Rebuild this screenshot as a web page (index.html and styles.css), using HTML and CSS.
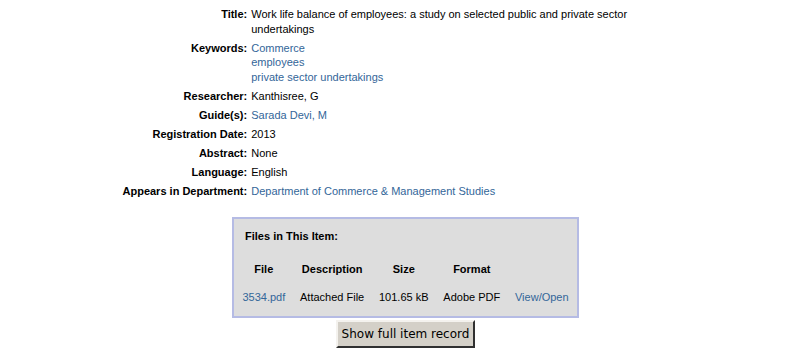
FILE: index.html
```html
<!doctype html>
<html lang="en">

<head>
    <meta charset="utf-8" />
    <meta name="viewport" content="width=device-width, initial-scale=1" />
    <title>Work life balance of employees</title>
    <link rel="stylesheet" href="styles.css">
</head>

<body>
    <div class="item-meta">
        <div class="label">Title:</div>
        <div class="value">Work life balance of employees: a study on selected public and private sector undertakings</div>

        <div class="label">Keywords:</div>
        <div class="value">
            <a href="#">Commerce</a><br>
            <a href="#">employees</a><br>
            <a href="#">private sector undertakings</a>
        </div>

        <div class="label">Researcher:</div>
        <div class="value">Kanthisree, G</div>

        <div class="label">Guide(s):</div>
        <div class="value"><a href="#">Sarada Devi, M</a></div>

        <div class="label">Registration Date:</div>
        <div class="value">2013</div>

        <div class="label">Abstract:</div>
        <div class="value">None</div>

        <div class="label">Language:</div>
        <div class="value">English</div>

        <div class="label">Appears in Department:</div>
        <div class="value"><a href="#">Department of Commerce &amp; Management Studies</a></div>
    </div>

    <div class="files-panel">
        <p class="files-heading">Files in This Item:</p>
        <table class="files-table">
            <tr>
                <th>File</th>
                <th>Description</th>
                <th>Size</th>
                <th>Format</th>
                <th></th>
            </tr>
            <tr>
                <td><a href="#">3534.pdf</a></td>
                <td>Attached File</td>
                <td>101.65 kB</td>
                <td>Adobe PDF</td>
                <td><a href="#">View/Open</a></td>
            </tr>
        </table>
    </div>

    <div class="record-btn-row">
        <button class="record-btn">Show full item record</button>
    </div>
</body>

</html>
```

FILE: styles.css
```css
body {
    font-family: "Liberation Sans", Arial, sans-serif;
    font-size: 11px;
    color: #000;
    margin: 0;
    padding-top: 7px;
    background-color: #fff;
}

a {
    color: #336699;
    text-decoration: none;
}

.item-meta {
    display: grid;
    grid-template-columns: auto 1fr;
    column-gap: 4px;
    row-gap: 4.5px;
    width: 566px;
    margin: 0 auto;
    line-height: 14.5px;
}

.item-meta .label {
    font-weight: bold;
    text-align: right;
    white-space: nowrap;
}

.files-panel {
    width: fit-content;
    margin: 19px auto 0;
    padding: 10px 0 4px;
    background-color: #dddddd;
    border: 2px solid #b5bbe4;
}

.files-heading {
    margin: 0 0 10px 11px;
    font-weight: bold;
    line-height: 15px;
}

.files-table {
    border-spacing: 2px;
}

.files-table th,
.files-table td {
    padding: 6px 6.4px 5px;
    line-height: 15px;
    text-align: center;
    white-space: nowrap;
}

.record-btn-row {
    text-align: center;
    margin-top: 2px;
}

.record-btn {
    font-family: "DejaVu Sans", sans-serif;
    font-size: 12px;
    line-height: 14px;
    padding: 5px 4px;
    color: #000;
    background-color: #d4d0c8;
    border: 2px solid;
    border-color: #f4f2ee #303030 #303030 #f4f2ee;
    border-radius: 0;
}
```
